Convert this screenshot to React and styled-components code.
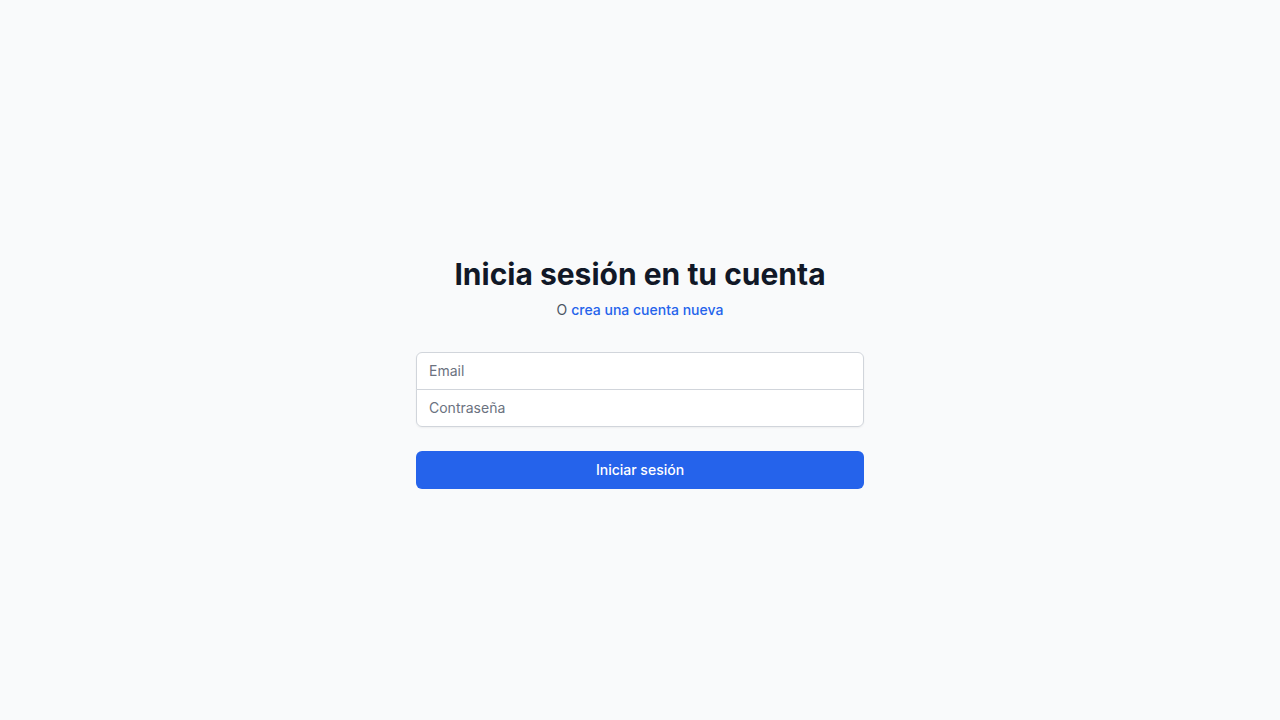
import React from "react";
import styled, { createGlobalStyle } from "styled-components";

const GlobalStyle = createGlobalStyle`
  * { box-sizing: border-box; }
  body {
    margin: 0;
    background: #f9fafb;
    font-family: Inter, "Noto Sans", sans-serif;
    -webkit-font-smoothing: antialiased;
  }
`;

const Page = styled.div`
  min-height: 100vh;
  display: flex;
  align-items: center;
  justify-content: center;
  padding: 24px 16px 0;
`;

const Card = styled.div`
  width: 448px;
`;

const Title = styled.h2`
  margin: 0;
  text-align: center;
  font-size: 30px;
  line-height: 36px;
  font-weight: 700;
  color: #111827;
`;

const Subtitle = styled.p`
  margin: 8px 0 0;
  text-align: center;
  font-size: 14px;
  line-height: 20px;
  color: #4b5563;
`;

const Link = styled.a`
  color: #2563eb;
  font-weight: 500;
  text-decoration: none;
`;

const Form = styled.form`
  margin-top: 32px;
`;

const Fields = styled.div`
  border-radius: 6px;
  box-shadow: 0 1px 2px rgba(0, 0, 0, 0.05);
`;

const Input = styled.input`
  display: block;
  width: 100%;
  height: 38px;
  padding: 8px 12px;
  font-family: inherit;
  font-size: 14px;
  line-height: 20px;
  color: #111827;
  background: #fff;
  border: 1px solid #d1d5db;
  border-radius: ${(p) => (p.$first ? "6px 6px 0 0" : "0 0 6px 6px")};
  margin-top: ${(p) => (p.$first ? "0" : "-1px")};
  outline: none;

  &::placeholder {
    color: #6b7280;
  }
`;

const Button = styled.button`
  display: block;
  width: 100%;
  height: 38px;
  margin-top: 24px;
  border: none;
  border-radius: 6px;
  background: #2563eb;
  color: #fff;
  font-family: inherit;
  font-size: 14px;
  font-weight: 500;
  cursor: pointer;
`;

export default function App() {
  return (
    <>
      <GlobalStyle />
      <Page>
        <Card>
          <Title>Inicia sesión en tu cuenta</Title>
          <Subtitle>
            O <Link href="#">crea una cuenta nueva</Link>
          </Subtitle>
          <Form onSubmit={(e) => e.preventDefault()}>
            <Fields>
              <Input $first type="email" placeholder="Email" />
              <Input type="password" placeholder="Contraseña" />
            </Fields>
            <Button type="submit">Iniciar sesión</Button>
          </Form>
        </Card>
      </Page>
    </>
  );
}
